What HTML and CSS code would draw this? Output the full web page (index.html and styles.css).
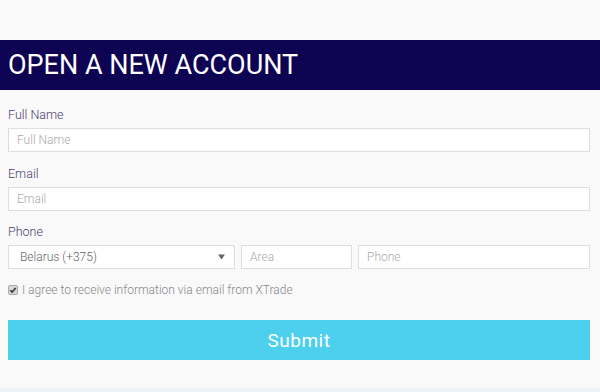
FILE: index.html
```html
<!DOCTYPE html>
<html lang="en">
<head>
    <meta charset="UTF-8">
    <meta name="viewport" content="width=device-width, initial-scale=1.0">
    <title>Open a new account</title>
    <link rel="stylesheet" href="styles.css">
</head>
<body>

    <div class="page">
        <h1 class="header">OPEN A NEW ACCOUNT</h1>

        <form class="form" action="#" method="POST">
            <div class="field">
                <label for="fullname">Full Name</label>
                <input type="text" id="fullname" placeholder="Full Name">
            </div>
            <div class="field">
                <label for="email">Email</label>
                <input type="email" id="email" placeholder="Email">
            </div>
            <div class="field">
                <label for="area">Phone</label>
                <div class="phone-row">
                    <div class="select">
                        <span>Belarus (+375)</span>
                        <svg width="7" height="6" viewBox="0 0 7 6"><path d="M0 0.5h7L3.5 5.5z" fill="#666"/></svg>
                    </div>
                    <input type="text" id="area" placeholder="Area">
                    <input type="text" id="phone" placeholder="Phone">
                </div>
            </div>

            <div class="agree">
                <span class="check">
                    <svg width="10" height="10" viewBox="0 0 10 10">
                        <rect x="0.5" y="0.5" width="9" height="9" rx="1.5" fill="#d6d6d6" stroke="#aaa"/>
                        <path d="M2.3 5.2l1.8 1.8 3.6-4" fill="none" stroke="#333" stroke-width="1.6"/>
                    </svg>
                </span>
                I agree to receive information via email from XTrade
            </div>

            <button type="submit">Submit</button>
        </form>
    </div>

    <div class="footer"></div>

</body>
</html>
```

FILE: styles.css
```css
body {
    margin: 0;
    background: #f9f9f9;
    font-family: Roboto, "Liberation Sans", sans-serif;
}
.page {
    height: 388px;
    padding-top: 40px;
    box-sizing: border-box;
}
.header {
    margin: 0;
    height: 50px;
    line-height: 51px;
    padding: 0 8px;
    background: #0d0352;
    color: #ffffff;
    font-size: 27px;
    font-weight: 400;
}
.form {
    display: flex;
    flex-direction: column;
    padding: 17px 10px 0 8px;
}
.field {
    display: flex;
    flex-direction: column;
    margin-bottom: 13.5px;
}
label {
    height: 15px;
    line-height: 15px;
    margin-bottom: 6px;
    font-size: 12.5px;
    font-weight: 300;
    color: #4b3d70;
}
input[type="text"],
input[type="email"],
.select {
    box-sizing: border-box;
    width: 100%;
    height: 24px;
    flex: none;
    margin: 0;
    padding: 0 8px;
    border: 1px solid #dedede;
    background: #ffffff;
    font-family: inherit;
    font-size: 12px;
    font-weight: 300;
    color: #666;
    outline: none;
}
input::placeholder {
    color: #aaa;
}
.phone-row {
    display: grid;
    grid-template-columns: 227px 111px 1fr;
    gap: 6px;
}
.select {
    display: flex;
    align-items: center;
    justify-content: space-between;
    padding: 0 9px 0 11px;
    color: #666;
}
.agree {
    display: flex;
    align-items: center;
    height: 14px;
    font-size: 12px;
    font-weight: 300;
    color: #888;
}
.check {
    display: flex;
    margin-right: 4px;
}
button {
    display: block;
    width: 100%;
    height: 40px;
    margin-top: 23.5px;
    border: none;
    background: #4dcfee;
    color: #ffffff;
    font-family: inherit;
    font-size: 19px;
    letter-spacing: 0.5px;
    cursor: pointer;
}
.footer {
    height: 4px;
    background: #edf2f6;
}
```
